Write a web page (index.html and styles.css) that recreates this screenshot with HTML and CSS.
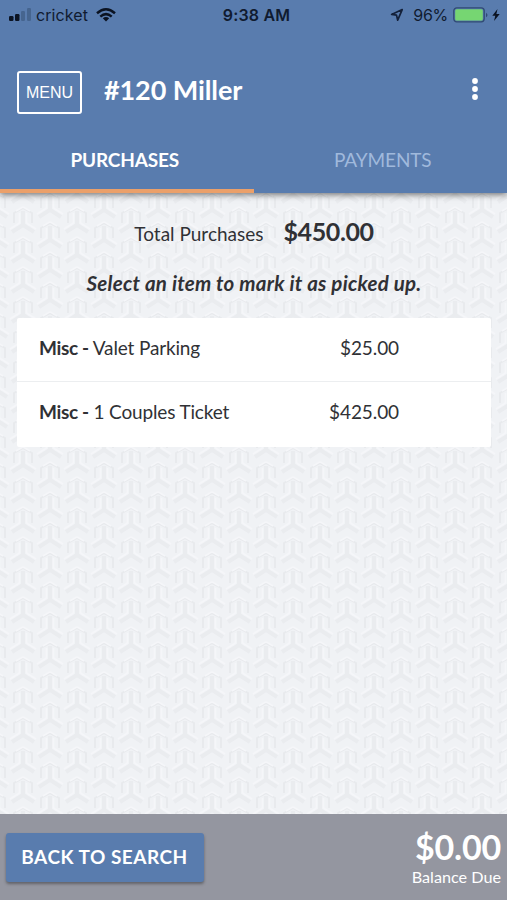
FILE: index.html
```html
<!DOCTYPE html>
<html lang="en">
<head>
<meta charset="utf-8">
<meta name="viewport" content="width=device-width, initial-scale=1">
<title>#120 Miller</title>
<link rel="stylesheet" href="styles.css">
</head>
<body>
<div class="app">
  <header class="header">
    <div class="status">
      <div class="status-left">
        <svg class="signal" width="23" height="14" viewBox="0 0 23 14"><g fill="#0b1322"><rect x="0" y="8" width="4.5" height="5" rx="1.2"/><rect x="6" y="6" width="4.5" height="7" rx="1.2"/></g><g fill="#46658f"><rect x="12" y="3" width="4" height="10" rx="1.2"/><rect x="18" y="0" width="4" height="13" rx="1.2"/></g></svg>
        <span class="carrier">cricket</span>
        <svg class="wifi" width="20" height="14" viewBox="0 0 20 14"><g fill="none" stroke="#0b1322" stroke-width="2.5"><path d="M1 5.2Q10-2.6 19 5.2"/><path d="M4.3 8.6Q10 3.7 15.7 8.6"/></g><path d="M6.8 10.3Q10 7.8 13.2 10.3L10 13.5Z" fill="#0b1322"/></svg>
      </div>
      <span class="clock">9:38 AM</span>
      <div class="status-right">
        <svg width="14" height="14" viewBox="0 0 14 14"><path d="M12.2 1.6L1.6 6.4L6.5 7.1L7.7 12.2Z" fill="none" stroke="#14213a" stroke-width="1.7" stroke-linejoin="round"/></svg>
        <span class="percent">96%</span>
        <svg class="battery" width="36" height="16" viewBox="0 0 36 16"><rect x=".8" y=".8" width="30.4" height="14" rx="3" fill="none" stroke="#304a73" stroke-width="1.3"/><rect x="2.2" y="2.2" width="27.6" height="11.2" rx="1.5" fill="#76d672"/><path d="M33 5.7Q36 8 33 10.3Z" fill="#304a73"/></svg>
        <svg class="bolt" width="8" height="12" viewBox="0 0 8 12"><path d="M5.5 0L.3 6.7H3.3L2 12L7.7 4.9H4.4Z" fill="#0b1322"/></svg>
      </div>
    </div>
    <div class="toolbar">
      <button class="menu">MENU</button>
      <h1>#120 Miller</h1>
      <svg class="more" width="8" height="24" viewBox="0 0 8 24" fill="#fff"><circle cx="4" cy="4" r="2.9"/><circle cx="4" cy="12" r="2.9"/><circle cx="4" cy="20" r="2.9"/></svg>
    </div>
    <nav class="tabs">
      <a class="tab active">PURCHASES</a>
      <a class="tab">PAYMENTS</a>
    </nav>
  </header>
  <main class="content">
    <svg class="texture" width="100%" height="100%" aria-hidden="true">
      <defs>
        <pattern id="weave" width="54" height="30" patternUnits="userSpaceOnUse" patternTransform="translate(-4 10)">
          <g fill="none" stroke-linejoin="round">
            <g id="star">
              <path d="M27 8V23M27 22L16 29M27 22L38 29" stroke="#eaecef" stroke-width="4"/>
              <path d="M18 20V10L27 5L36 10V20" stroke="#e8eaed" stroke-width="2"/>
              <path d="M23.5 10V20L14 26M30.5 10V20L40 26" stroke="#f5f6f9" stroke-width="1.6"/>
              <path d="M20 8L27 4L34 8" stroke="#f5f6f9" stroke-width="1.5"/>
            </g>
            <use href="#star" y="-30"/><use href="#star" y="30"/>
            <use href="#star" x="-27" y="15"/><use href="#star" x="27" y="15"/>
            <use href="#star" x="-27" y="-15"/><use href="#star" x="27" y="-15"/>
          </g>
        </pattern>
      </defs>
      <rect width="100%" height="100%" fill="url(#weave)"/>
    </svg>
    <div class="total"><span>Total Purchases</span><strong>$450.00</strong></div>
    <p class="hint">Select an item to mark it as picked up.</p>
    <ul class="items">
      <li><span><b>Misc -</b> Valet Parking</span><span class="price">$25.00</span></li>
      <li><span><b>Misc -</b> 1 Couples Ticket</span><span class="price">$425.00</span></li>
    </ul>
  </main>
  <footer class="footer">
    <button class="back">BACK TO SEARCH</button>
    <div class="balance"><strong>$0.00</strong><span>Balance Due</span></div>
  </footer>
</div>
</body>
</html>
```
FILE: styles.css
```css
* { box-sizing: border-box; }
body { margin: 0; font-family: Lato, sans-serif; color: #303135; }
button { font: inherit; color: #fff; }
svg { display: block; flex: none; }
.app { height: 900px; display: flex; flex-direction: column; overflow: hidden; }
.header { height: 193px; flex: none; background: #597cae; color: #fff; box-shadow: 0 2px 6px rgba(0,0,0,.5); z-index: 1; display: flex; flex-direction: column; }
.status { height: 30px; padding: 0 7px 0 9px; display: grid; grid-template-columns: 1fr auto 1fr; align-items: center; font: 16px/30px Inter, sans-serif; color: #101b30; }
.status-left, .status-right { display: flex; align-items: center; }
.status-right { justify-content: flex-end; }
.carrier { margin-left: 4px; letter-spacing: .1px; }
.wifi { margin-left: 8px; }
.clock { font-weight: 600; letter-spacing: .2px; position: relative; left: 2px; }
.percent { margin-left: 9px; letter-spacing: -.3px; }
.battery { margin-left: 5px; }
.bolt { margin-left: 3px; }
.toolbar { height: 97px; padding: 41px 28px 0 17px; display: flex; align-items: flex-start; }
.menu { width: 65px; height: 43px; padding: 0; border: 2px solid #fff; border-radius: 3px; background: none; font: 16px "Liberation Sans", sans-serif; }
h1 { margin: 3px auto 0 22px; font-size: 27px; line-height: 32px; font-weight: 700; letter-spacing: -.1px; }
.more { margin-top: 6px; }
.tabs { flex: 1; display: grid; grid-template-columns: 1fr 1fr; }
.tab { display: flex; align-items: center; justify-content: center; border-bottom: 4px solid transparent; font-size: 19px; letter-spacing: -.1px; color: #a0b9dc; padding: 2px 0 0 5px; }
.tab.active { color: #fff; font-weight: 700; letter-spacing: -.15px; border-color: #eba06a; padding: 2px 4px 0 0; }
.content { flex: 1; position: relative; padding: 20px 16px 0 17px; background: #f0f2f5; }
.texture { position: absolute; inset: 0; }
.total, .hint, .items { position: relative; }
.total { height: 36px; display: flex; justify-content: center; align-items: baseline; gap: 20px; font-size: 19px; line-height: 36px; }
.total strong { font-size: 25px; letter-spacing: -.4px; }
.hint { margin: 22px 0 0; text-align: center; font-size: 20.5px; line-height: 24px; font-style: italic; font-weight: 700; letter-spacing: .24px; }
.items { list-style: none; margin: 23px 0 0; padding: 0; background: #fff; border-radius: 2px; font-size: 19px; letter-spacing: -.15px; }
.items b { letter-spacing: -.35px; }
.price { letter-spacing: -.1px; }
.items li { height: 63px; padding: 0 92px 5px 22px; display: flex; align-items: center; justify-content: space-between; }
.items li + li { height: 66px; padding-bottom: 7px; border-top: 1px solid #eceef0; }
.footer { height: 86px; flex: none; padding: 0 6px; background: #9496a0; color: #fff; display: flex; align-items: center; justify-content: space-between; z-index: 1; }
.back { width: 198px; height: 49px; padding: 0 1px 1px 0; border: 0; border-radius: 3px; background: #597cae; box-shadow: 0 2px 3px rgba(0,0,0,.35); font-size: 19px; font-weight: 700; letter-spacing: .5px; }
.balance { display: flex; flex-direction: column; align-items: flex-end; font-size: 16.2px; line-height: 22px; padding-top: 2px; }
.balance strong { font-size: 34px; line-height: 38px; letter-spacing: -.2px; }
```
